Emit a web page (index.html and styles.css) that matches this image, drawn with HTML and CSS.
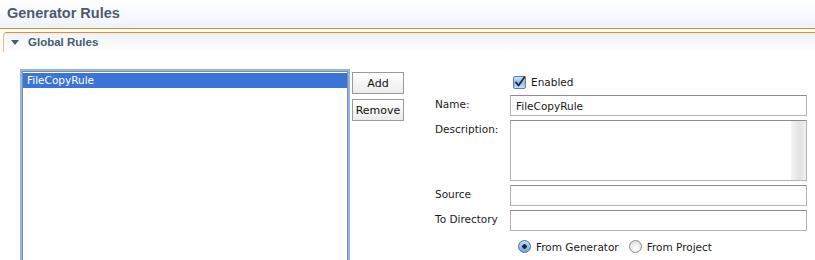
FILE: index.html
```html
<!DOCTYPE html>
<html lang="en">
<head>
    <meta charset="UTF-8">
    <title>Generator Rules</title>
    <link rel="stylesheet" href="styles.css">
</head>
<body>
    <header class="page_header">
        <h1 class="page_title">Generator Rules</h1>
    </header>

    <section class="rules">
        <h2 class="rules_title"><span class="twisty"></span>Global Rules</h2>

        <div class="rules_body">
            <ul class="rule_list">
                <li class="selected">FileCopyRule</li>
            </ul>

            <div class="list_buttons">
                <button type="button" class="btn">Add</button>
                <button type="button" class="btn">Remove</button>
            </div>

            <div class="rule_form">
                <span></span>
                <label class="check">
                    <svg class="checkbox" width="13" height="13" viewBox="0 0 13 13">
                        <defs>
                            <linearGradient id="cbFill" x1="0" y1="0" x2="0" y2="1">
                                <stop offset="0" stop-color="#d3e6fb"/>
                                <stop offset="0.5" stop-color="#8fbaeb"/>
                                <stop offset="1" stop-color="#c9e2fb"/>
                            </linearGradient>
                        </defs>
                        <rect x="0.5" y="0.5" width="12" height="12" rx="1.5" fill="url(#cbFill)" stroke="#5b7fa9"/>
                        <path d="M3 6.5 L5.5 9.5 L11.5 1" fill="none" stroke="#1c2a3c" stroke-width="1.8" stroke-linecap="round" stroke-linejoin="round"/>
                    </svg>
                    Enabled
                </label>

                <label for="ruleName">Name:</label>
                <input type="text" id="ruleName" class="field" value="FileCopyRule">

                <label for="ruleDesc">Description:</label>
                <div class="field area">
                    <textarea id="ruleDesc"></textarea>
                    <div class="scroll"></div>
                </div>

                <label for="ruleSource">Source</label>
                <input type="text" id="ruleSource" class="field">

                <label for="ruleDir">To Directory</label>
                <input type="text" id="ruleDir" class="field">

                <span></span>
                <div class="radios">
                    <label class="radio"><span class="dot on"></span>From Generator</label>
                    <label class="radio"><span class="dot"></span>From Project</label>
                </div>
            </div>
        </div>
    </section>
</body>
</html>
```

FILE: styles.css
```css
*{
    padding: 0;
    margin: 0;
    box-sizing: border-box;
    font-family: 'DejaVu Sans', sans-serif;
    font-size: 10.5px;
    color: #1a1a1a;
}
ul,ol{
    list-style-type: none;
}
body{
    background: #fff;
    overflow: hidden;
}
.page_header{
    height: 29px;
    padding: 5px 0 0 7px;
    background: linear-gradient(#ffffff, #eef2fb);
    border-bottom: 1px solid #f08a1c;
}
.page_title{
    font-family: 'Liberation Sans', sans-serif;
    font-size: 14.5px;
    font-weight: bold;
    color: #4c5a6e;
}
.rules{
    margin: 3px 0 0 3px;
}
.rules_title{
    height: 20px;
    padding: 3px 0 0 7px;
    border-top: 1px solid #f08a1c;
    border-left: 1px solid #f5b57a;
    border-top-left-radius: 4px;
    background: linear-gradient(#eef2fb, #ffffff);
    font-family: 'Liberation Sans', sans-serif;
    font-size: 11.5px;
    font-weight: bold;
    color: #4c5a6e;
}
.twisty{
    display: inline-block;
    width: 0;
    height: 0;
    margin: 0 9px 1px 0;
    border-left: 4px solid transparent;
    border-right: 4px solid transparent;
    border-top: 5px solid #4c5a6e;
    vertical-align: middle;
}
.rules_body{
    display: flex;
    align-items: flex-start;
    padding: 19px 0 0 19px;
}
.rule_list{
    width: 326px;
    height: 200px;
    border: 1px solid #8a8a8a;
    box-shadow: 0 0 0 2px #8fb6e8;
    background: #fff;
    padding-top: 1px;
}
.rule_list li{
    height: 15px;
    padding-left: 4px;
    line-height: 15px;
}
.rule_list .selected{
    background: #3a74d7;
    color: #fff;
}
.list_buttons{
    display: flex;
    flex-direction: column;
    gap: 5px;
    margin: 1px 0 0 4px;
}
.btn{
    width: 52px;
    height: 22px;
    border: 1px solid #9a9a9a;
    background: linear-gradient(#ffffff, #ececec);
    color: #111;
    font-size: 11px;
}
.rule_form{
    display: grid;
    grid-template-columns: 75px 297px;
    row-gap: 4px;
    margin: 1px 0 0 31px;
}
.rule_form > label{
    padding-top: 3px;
}
.check{
    display: flex;
    align-items: center;
    gap: 5px;
    height: 17px;
    padding-left: 3px;
    margin-bottom: 2px;
}
.field{
    height: 21px;
    border: 1px solid #b4b4b4;
    border-top-color: #8c8c8c;
    padding: 0 5px;
    background: #fff;
    outline: 0;
}
.area{
    display: flex;
    height: 61px;
    padding: 0;
}
.area textarea{
    flex: 1;
    border: 0;
    outline: 0;
    resize: none;
}
.scroll{
    width: 15px;
    background: linear-gradient(to right, #f4f4f4, #e2e2e2 60%, #f0f0f0);
}
.radios{
    display: flex;
    gap: 10px;
    padding: 5px 0 0 8px;
}
.radio{
    display: flex;
    align-items: center;
    gap: 5px;
}
.dot{
    width: 13px;
    height: 13px;
    border-radius: 50%;
    border: 1px solid #8a8a8a;
    background: radial-gradient(circle at 50% 70%, #ffffff, #d8d8d8);
}
.dot.on{
    border-color: #4d6f9c;
    background: radial-gradient(circle, #1b2838 0 2px, transparent 2.5px), linear-gradient(#c4dcf8, #6ea4e3);
}
```
